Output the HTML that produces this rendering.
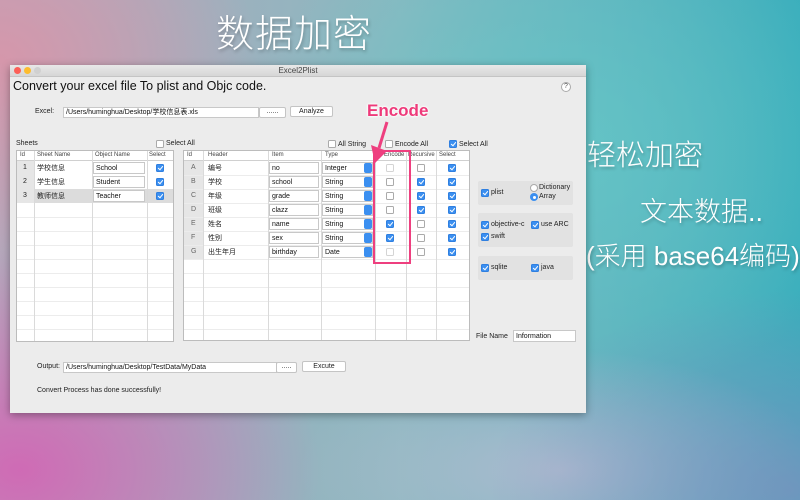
<!DOCTYPE html>
<html><head><meta charset="utf-8"><style>
*{margin:0;padding:0;box-sizing:border-box}
body{width:800px;height:500px;overflow:hidden;position:relative;font-family:"Liberation Sans","Noto Sans CJK SC",sans-serif;
background:
radial-gradient(ellipse 300px 220px at 20px 470px,rgba(210,100,180,.9),rgba(210,100,180,0)),
radial-gradient(ellipse 260px 200px at 0px 60px,rgba(215,150,170,.95),rgba(215,150,170,0)),
radial-gradient(ellipse 300px 200px at 790px 490px,rgba(130,140,190,.7),rgba(130,140,190,0)),
radial-gradient(ellipse 260px 120px at 560px 470px,rgba(200,190,215,.7),rgba(200,190,215,0)),
radial-gradient(ellipse 320px 260px at 560px 150px,rgba(100,200,200,.8),rgba(100,200,200,0)),
linear-gradient(90deg,#b4a8bc 0%,#8ab8c0 50%,#3aaebc 100%);}
.a{position:absolute}
.big{color:#fff;font-family:"Liberation Sans","Noto Sans CJK SC",sans-serif;text-shadow:1px 2px 3px rgba(0,0,0,.25);white-space:nowrap;font-weight:300}
.win{position:absolute;left:10px;top:65px;width:576px;height:348px;background:#ececec;box-shadow:0 2px 8px rgba(0,0,0,.35)}
.tb{position:absolute;left:0;top:0;width:576px;height:12px;background:linear-gradient(#e8e8e8,#d6d6d6);border-bottom:1px solid #c4c4c4;font-size:8px;color:#444;text-align:center;line-height:12px}
.dot{position:absolute;top:2px;width:7px;height:7px;border-radius:50%}
.t{position:absolute;font-size:7px;color:#222;white-space:nowrap}
.in{position:absolute;background:#fff;border:1px solid #c8c8c8;font-size:7px;line-height:9px;padding-left:2px;color:#111;white-space:nowrap;overflow:hidden}
.btn{position:absolute;background:#fff;border:1px solid #c4c4c4;border-radius:2px;font-size:7px;text-align:center;color:#222}
.cb{position:absolute;width:8px;height:8px;border:1px solid #aaa;background:#fff;border-radius:1.5px}
.cb.on{background:#3b8ff0;border-color:#2f7fe0}
.cb.on::after{content:"";position:absolute;left:2px;top:0px;width:2px;height:4px;border:solid #fff;border-width:0 1.3px 1.3px 0;transform:rotate(40deg)}
.tbl{position:absolute;background:#fff;border:1px solid #bcbcbc;overflow:hidden}
.hl{position:absolute;left:0;right:0;height:1px;background:#ececec}
.vl{position:absolute;top:0;bottom:0;width:1px;background:#dadada}
.panel{position:absolute;background:#e2e2e2;border-radius:2px}
.sel{position:absolute;width:8px;height:10px;background:#3b8ff0;border-radius:2px}
</style></head><body>
<div class="a big" style="left:216px;top:3px;font-size:38px;letter-spacing:1px">数据加密</div>
<div class="a big" style="left:587px;top:132px;font-size:29px">轻松加密</div>
<div class="a big" style="left:640px;top:190px;font-size:27px">文本数据..</div>
<div class="a big" style="left:586px;top:236px;font-size:26px">(采用 base64编码)</div>

<div class="win">
<div class="tb">Excel2Plist
<div class="dot" style="left:4px;background:#fc5f57"></div><div class="dot" style="left:14px;background:#fdbc2e"></div><div class="dot" style="left:24px;background:#d0d0d0"></div></div>
<div class="t" style="left:3px;top:14px;font-size:12.5px;color:#111">Convert your excel file To plist and Objc code.</div>
<div class="a" style="left:551px;top:17px;width:10px;height:10px;border:1px solid #aaa;border-radius:50%;background:#fff;font-size:7px;text-align:center;line-height:8px;color:#555">?</div>
<div class="t" style="left:25px;top:43px">Excel:</div>
<div class="in" style="left:53px;top:42px;width:196px;height:11px">/Users/huminghua/Desktop/学校信息表.xls</div>
<div class="btn" style="left:249px;top:42px;width:27px;height:11px;line-height:8px">......</div>
<div class="btn" style="left:280px;top:41px;width:43px;height:11px;line-height:9px">Analyze</div>

<div class="t" style="left:6px;top:75px">Sheets</div>
<div class="cb" style="left:146px;top:75px"></div><div class="t" style="left:156px;top:75px">Select All</div>
<div class="cb" style="left:318px;top:75px"></div><div class="t" style="left:328px;top:76px">All String</div>
<div class="cb" style="left:375px;top:75px"></div><div class="t" style="left:385px;top:76px">Encode All</div>
<div class="cb on" style="left:439px;top:75px"></div><div class="t" style="left:449px;top:76px">Select All</div>

<!-- left table -->
<div class="tbl" style="left:6px;top:85px;width:158px;height:192px">
<div class="t" style="left:3px;top:1px;font-size:6px;color:#444">Id</div>
<div class="t" style="left:20px;top:1px;font-size:6px;color:#444">Sheet Name</div>
<div class="t" style="left:78px;top:1px;font-size:6px;color:#444">Object Name</div>
<div class="t" style="left:132px;top:1px;font-size:6px;color:#444">Select</div>
<div class="a" style="left:0;top:38px;width:157px;height:14px;background:#dcdcdc"></div>
<div class="a" style="left:0;top:10px;width:17px;height:42px;background:#e6e6e6"></div>
<div class="hl" style="top:9px;background:#d0d0d0"></div>
<div class="hl" style="top:66px"></div><div class="hl" style="top:80px"></div><div class="hl" style="top:94px"></div><div class="hl" style="top:108px"></div><div class="hl" style="top:122px"></div><div class="hl" style="top:136px"></div><div class="hl" style="top:150px"></div><div class="hl" style="top:164px"></div><div class="hl" style="top:178px"></div>
<div class="vl" style="left:17px"></div><div class="vl" style="left:75px"></div><div class="vl" style="left:130px"></div>
<div class="t" style="left:6px;top:13px">1</div><div class="t" style="left:20px;top:12px">学校信息</div>
<div class="in" style="left:76px;top:11px;width:52px;height:12px;line-height:11px">School</div><div class="cb on" style="left:139px;top:13px"></div>
<div class="t" style="left:6px;top:27px">2</div><div class="t" style="left:20px;top:26px">学生信息</div>
<div class="in" style="left:76px;top:25px;width:52px;height:12px;line-height:11px">Student</div><div class="cb on" style="left:139px;top:27px"></div>
<div class="t" style="left:6px;top:41px">3</div><div class="t" style="left:20px;top:40px">教师信息</div>
<div class="in" style="left:76px;top:39px;width:52px;height:12px;line-height:11px">Teacher</div><div class="cb on" style="left:139px;top:41px"></div>
</div>

<!-- right table -->
<div class="tbl" style="left:173px;top:85px;width:287px;height:191px">
<div class="t" style="left:3px;top:1px;font-size:6px;color:#444">Id</div>
<div class="t" style="left:24px;top:1px;font-size:6px;color:#444">Header</div>
<div class="t" style="left:88px;top:1px;font-size:6px;color:#444">Item</div>
<div class="t" style="left:141px;top:1px;font-size:6px;color:#444">Type</div>
<div class="t" style="left:200px;top:1px;font-size:6px;color:#444">Encode</div>
<div class="t" style="left:224px;top:1px;font-size:6px;color:#444">Recursive</div>
<div class="t" style="left:255px;top:1px;font-size:6px;color:#444">Select</div>
<div class="a" style="left:0;top:10px;width:19px;height:98px;background:#e6e6e6"></div>
<div class="hl" style="top:9px;background:#d0d0d0"></div>
<div class="hl" style="top:24px"></div><div class="hl" style="top:38px"></div><div class="hl" style="top:52px"></div><div class="hl" style="top:66px"></div><div class="hl" style="top:80px"></div><div class="hl" style="top:94px"></div><div class="hl" style="top:108px"></div><div class="hl" style="top:122px"></div><div class="hl" style="top:136px"></div><div class="hl" style="top:150px"></div><div class="hl" style="top:164px"></div><div class="hl" style="top:178px"></div>
<div class="vl" style="left:19px"></div><div class="vl" style="left:84px"></div><div class="vl" style="left:137px"></div><div class="vl" style="left:191px"></div><div class="vl" style="left:222px"></div><div class="vl" style="left:252px"></div>

<div class="t" style="left:7px;top:13px;color:#666">A</div><div class="t" style="left:24px;top:12px">编号</div>
<div class="in" style="left:85px;top:11px;width:50px;height:12px;line-height:11px">no</div>
<div class="in" style="left:138px;top:11px;width:51px;height:12px;line-height:11px">Integer</div><div class="sel" style="left:180px;top:12px"></div>
<div class="cb" style="left:202px;top:13px;opacity:.5"></div><div class="cb" style="left:233px;top:13px"></div><div class="cb on" style="left:264px;top:13px"></div>

<div class="t" style="left:7px;top:27px;color:#666">B</div><div class="t" style="left:24px;top:26px">学校</div>
<div class="in" style="left:85px;top:25px;width:50px;height:12px;line-height:11px">school</div>
<div class="in" style="left:138px;top:25px;width:51px;height:12px;line-height:11px">String</div><div class="sel" style="left:180px;top:26px"></div>
<div class="cb" style="left:202px;top:27px"></div><div class="cb on" style="left:233px;top:27px"></div><div class="cb on" style="left:264px;top:27px"></div>

<div class="t" style="left:7px;top:41px;color:#666">C</div><div class="t" style="left:24px;top:40px">年级</div>
<div class="in" style="left:85px;top:39px;width:50px;height:12px;line-height:11px">grade</div>
<div class="in" style="left:138px;top:39px;width:51px;height:12px;line-height:11px">String</div><div class="sel" style="left:180px;top:40px"></div>
<div class="cb" style="left:202px;top:41px"></div><div class="cb on" style="left:233px;top:41px"></div><div class="cb on" style="left:264px;top:41px"></div>

<div class="t" style="left:7px;top:55px;color:#666">D</div><div class="t" style="left:24px;top:54px">班级</div>
<div class="in" style="left:85px;top:53px;width:50px;height:12px;line-height:11px">clazz</div>
<div class="in" style="left:138px;top:53px;width:51px;height:12px;line-height:11px">String</div><div class="sel" style="left:180px;top:54px"></div>
<div class="cb" style="left:202px;top:55px"></div><div class="cb on" style="left:233px;top:55px"></div><div class="cb on" style="left:264px;top:55px"></div>

<div class="t" style="left:7px;top:69px;color:#666">E</div><div class="t" style="left:24px;top:68px">姓名</div>
<div class="in" style="left:85px;top:67px;width:50px;height:12px;line-height:11px">name</div>
<div class="in" style="left:138px;top:67px;width:51px;height:12px;line-height:11px">String</div><div class="sel" style="left:180px;top:68px"></div>
<div class="cb on" style="left:202px;top:69px"></div><div class="cb" style="left:233px;top:69px"></div><div class="cb on" style="left:264px;top:69px"></div>

<div class="t" style="left:7px;top:83px;color:#666">F</div><div class="t" style="left:24px;top:82px">性别</div>
<div class="in" style="left:85px;top:81px;width:50px;height:12px;line-height:11px">sex</div>
<div class="in" style="left:138px;top:81px;width:51px;height:12px;line-height:11px">String</div><div class="sel" style="left:180px;top:82px"></div>
<div class="cb on" style="left:202px;top:83px"></div><div class="cb" style="left:233px;top:83px"></div><div class="cb on" style="left:264px;top:83px"></div>

<div class="t" style="left:7px;top:97px;color:#666">G</div><div class="t" style="left:24px;top:96px">出生年月</div>
<div class="in" style="left:85px;top:95px;width:50px;height:12px;line-height:11px">birthday</div>
<div class="in" style="left:138px;top:95px;width:51px;height:12px;line-height:11px">Date</div><div class="sel" style="left:180px;top:96px"></div>
<div class="cb" style="left:202px;top:97px;opacity:.5"></div><div class="cb" style="left:233px;top:97px"></div><div class="cb on" style="left:264px;top:97px"></div>
</div>

<!-- right panels -->
<div class="panel" style="left:468px;top:116px;width:95px;height:24px">
<div class="cb on" style="left:3px;top:8px"></div><div class="t" style="left:13px;top:8px">plist</div>
<div class="a" style="left:52px;top:3px;width:8px;height:8px;border:1px solid #aaa;border-radius:50%;background:#fff"></div><div class="t" style="left:61px;top:3px">Dictionary</div>
<div class="a" style="left:52px;top:12px;width:8px;height:8px;border-radius:50%;background:#3b8ff0"><div style="position:absolute;left:2.5px;top:2.5px;width:3px;height:3px;border-radius:50%;background:#fff"></div></div><div class="t" style="left:61px;top:12px">Array</div>
</div>
<div class="panel" style="left:468px;top:148px;width:95px;height:34px">
<div class="cb on" style="left:3px;top:8px"></div><div class="t" style="left:13px;top:8px">objective-c</div>
<div class="cb on" style="left:53px;top:8px"></div><div class="t" style="left:63px;top:8px">use ARC</div>
<div class="cb on" style="left:3px;top:20px"></div><div class="t" style="left:13px;top:20px">swift</div>
</div>
<div class="panel" style="left:468px;top:191px;width:95px;height:24px">
<div class="cb on" style="left:3px;top:8px"></div><div class="t" style="left:13px;top:8px">sqlite</div>
<div class="cb on" style="left:53px;top:8px"></div><div class="t" style="left:63px;top:8px">java</div>
</div>
<div class="t" style="left:466px;top:268px">File Name</div>
<div class="in" style="left:503px;top:265px;width:63px;height:12px;line-height:11px">Information</div>

<div class="t" style="left:27px;top:298px">Output:</div>
<div class="in" style="left:53px;top:297px;width:214px;height:11px">/Users/huminghua/Desktop/TestData/MyData</div>
<div class="btn" style="left:266px;top:297px;width:21px;height:11px;line-height:8px">.....</div>
<div class="btn" style="left:292px;top:296px;width:44px;height:11px;line-height:9px">Excute</div>
<div class="t" style="left:27px;top:322px">Convert Process has done successfully!</div>
</div>

<!-- annotation -->
<div class="a" style="left:373px;top:150px;width:38px;height:114px;border:2px solid #ee3f7f"></div>
<svg class="a" style="left:360px;top:118px" width="40" height="50"><path d="M27 4 L19 30" stroke="#ee3f7f" stroke-width="3" fill="none"/><path d="M11 27 L27 33 L15 45 Z" fill="#ee3f7f"/></svg>
<div class="a" style="left:367px;top:101px;font-size:17px;font-weight:bold;color:#ee3a7a;text-shadow:0 0 2px #fff,0 0 2px #fff,0 0 3px #fff">Encode</div>
</body></html>
